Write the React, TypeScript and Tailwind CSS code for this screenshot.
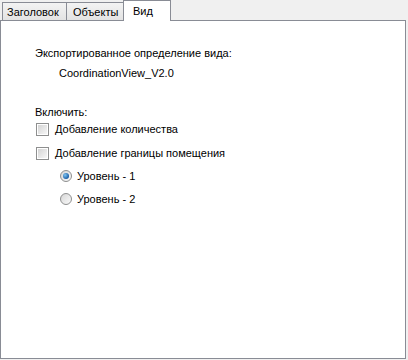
import React from "react";

function CheckBox() {
  return (
    <span className="w-[13px] h-[13px] border border-[#8e8f8f] bg-white p-[1px] shrink-0 box-border">
      <span className="block w-full h-full bg-gradient-to-br from-[#d4d4d4] to-[#f7f7f7]" />
    </span>
  );
}

function Radio({ checked }: { checked?: boolean }) {
  return (
    <span className="w-[12px] h-[12px] rounded-full border border-[#8e8f8f] bg-gradient-to-br from-[#d6d6d6] to-[#fafafa] shrink-0 flex items-center justify-center box-border">
      {checked && (
        <span className="w-[6px] h-[6px] rounded-full bg-[radial-gradient(circle_at_35%_35%,#7fc4f0,#1a5fa8_70%,#0d3f7a)]" />
      )}
    </span>
  );
}

export default function App() {
  return (
    <div
      className="w-[408px] h-[360px] bg-[#f0f0f0] text-[11px] text-black overflow-hidden"
      style={{ fontFamily: '"Liberation Sans", Arial, sans-serif' }}
    >
      <div className="flex items-end h-[20px] pl-[2px]">
        <div className="w-[65px] h-[18px] border border-b-0 border-[#898c95] bg-gradient-to-b from-[#f3f3f3] to-[#e3e3e3] flex items-center pl-[4px] leading-[14px]">
          Заголовок
        </div>
        <div className="w-[58px] h-[18px] border border-b-0 border-l-0 border-[#898c95] bg-gradient-to-b from-[#f3f3f3] to-[#e3e3e3] flex items-center pl-[6px] leading-[14px]">
          Объекты
        </div>
        <div className="relative z-10 -ml-[2px] -mb-[1px] w-[48px] h-[21px] border border-b-0 border-[#898c95] bg-white flex items-center pl-[9px] pb-[1px] leading-[14px]">
          Вид
        </div>
      </div>
      <div className="w-[406px] h-[339px] border border-[#898c95] bg-white pl-[34px] pt-[25px] flex flex-col leading-[14px]">
        <div className="h-[14px]">Экспортированное определение вида:</div>
        <div className="h-[14px] mt-[6px] ml-[24px]">CoordinationView_V2.0</div>
        <div className="h-[14px] mt-[25px]">Включить:</div>
        <div className="h-[14px] mt-[3px] flex items-center ml-[1px] gap-[6px]">
          <CheckBox />
          <span>Добавление количества</span>
        </div>
        <div className="h-[14px] mt-[10px] flex items-center ml-[1px] gap-[6px]">
          <CheckBox />
          <span>Добавление границы помещения</span>
        </div>
        <div className="h-[14px] mt-[9px] flex items-center ml-[25px] gap-[5px]">
          <Radio checked />
          <span>Уровень - 1</span>
        </div>
        <div className="h-[14px] mt-[9px] flex items-center ml-[25px] gap-[5px]">
          <Radio />
          <span>Уровень - 2</span>
        </div>
      </div>
    </div>
  );
}
